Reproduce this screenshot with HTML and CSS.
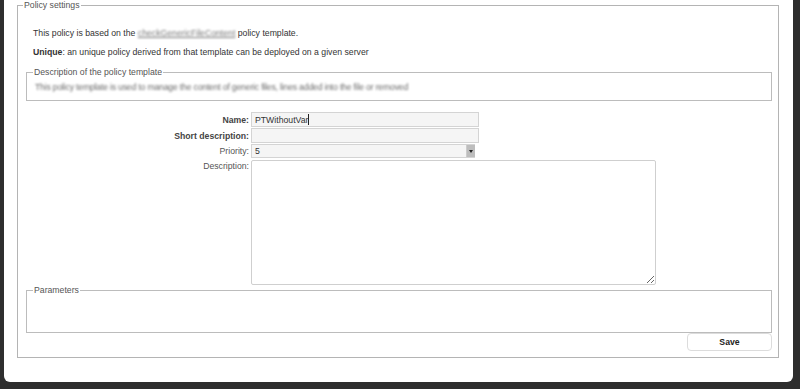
FILE: index.html
```html
<!DOCTYPE html>
<html>
<head>
<meta charset="utf-8">
<link rel="stylesheet" href="styles.css">
</head>
<body>
<div class="panel">
  <fieldset class="outer">
    <legend>Policy settings</legend>
    <p class="intro first">This policy is based on the <a class="blur link" href="#">checkGenericFileContent</a> policy template.</p>
    <p class="intro"><b>Unique</b>: an unique policy derived from that template can be deployed on a given server</p>
    <fieldset class="inner desc">
      <legend>Description of the policy template</legend>
      <p class="blur line">This policy template is used to manage the content of generic files, lines added into the file or removed</p>
    </fieldset>
    <div class="form">
      <label class="strong">Name:</label>
      <div class="field"><input class="text" type="text" value="PTWithoutVar"><span class="caret"></span></div>
      <label class="strong">Short description:</label>
      <div class="field"><input class="text" type="text" value=""></div>
      <label>Priority:</label>
      <div class="field"><select class="select"><option>5</option></select><span class="arrow"></span></div>
      <label class="top">Description:</label>
      <div class="field"><textarea class="area"></textarea></div>
    </div>
    <fieldset class="inner params">
      <legend>Parameters</legend>
      <div class="params-body"></div>
    </fieldset>
    <div class="actions"><button class="save">Save</button></div>
  </fieldset>
</div>
</body>
</html>
```
FILE: styles.css
```css
html, body {
  margin: 0;
  padding: 0;
}
body {
  background: #2e2e2e;
  font-family: "Liberation Sans", Arial, sans-serif;
  font-size: 8.7px;
  color: #333;
  height: 389px;
  overflow: hidden;
}
.panel {
  margin: 0 7px 0 4px;
  height: 382px;
  box-sizing: border-box;
  background: #fff;
  border-radius: 0 0 6px 6px;
  padding: 0 14px 0 13px;
}
fieldset {
  margin: 0;
  border: 1px solid #bcbcbc;
  min-width: 0;
}
legend {
  color: #555;
  font-size: 8.7px;
  line-height: 10px;
  padding: 0 1px;
}
.outer {
  padding: 0 6px 6px 8px;
  border-color: #b4b4b4;
}
.outer > legend {
  margin-left: -3px;
}
.intro {
  margin: 0;
  padding-left: 7px;
  line-height: 10px;
}
.intro.first {
  margin-top: 18px;
}
.intro + .intro {
  margin-top: 9px;
}
.intro b {
  color: #333;
}
.blur {
  filter: blur(1.2px);
  color: #888;
}
.link {
  text-decoration: underline;
  color: #777;
}
.inner {
  padding: 0 6px;
}
.desc {
  margin-top: 10px;
  padding-bottom: 8px;
}
.desc .line {
  margin: 5px 0 0 2px;
  line-height: 10px;
  color: #6a6a6a;
  letter-spacing: -0.2px;
}
.form {
  display: grid;
  grid-template-columns: 223px 1fr;
  column-gap: 2px;
  row-gap: 1px;
  margin-top: 11px;
  align-items: center;
}
.form label {
  text-align: right;
  color: #555;
  line-height: 10px;
}
.form label.strong {
  font-weight: bold;
  color: #444;
}
.form label.top {
  align-self: start;
  padding-top: 2px;
}
.field {
  position: relative;
  display: flex;
}
.text {
  width: 228px;
  height: 15px;
  box-sizing: border-box;
  border: 1px solid #d4d4d4;
  background: #f5f5f5;
  font-family: inherit;
  font-size: 8.7px;
  color: #333;
  padding: 0 3px;
  margin: 0;
  outline: none;
}
.caret {
  position: absolute;
  left: 57px;
  top: 2px;
  width: 1px;
  height: 11px;
  background: #222;
}
.select {
  -webkit-appearance: none;
  appearance: none;
  width: 224px;
  height: 14px;
  box-sizing: border-box;
  border: 1px solid #d4d4d4;
  background: #f5f5f5;
  font-family: inherit;
  font-size: 8.7px;
  color: #333;
  padding: 0 3px;
  margin: 0;
  border-radius: 0;
  outline: none;
}
.arrow {
  position: absolute;
  left: 215px;
  top: 1px;
  width: 8px;
  height: 12px;
  background: #bdbdbd;
  border-left: 1px solid #ccc;
}
.arrow::after {
  content: "";
  position: absolute;
  left: 2px;
  top: 5px;
  border-left: 2px solid transparent;
  border-right: 2px solid transparent;
  border-top: 3px solid #222;
}
.area {
  width: 405px;
  height: 125px;
  box-sizing: border-box;
  border: 1px solid #cfcfcf;
  border-radius: 2px;
  background: #fff;
  margin: 1px 0 0 0;
  padding: 2px;
  font-family: inherit;
  font-size: 8.7px;
  outline: none;
  resize: both;
}
.params {
  margin-top: 0;
}
.params-body {
  height: 37px;
}
.actions {
  display: flex;
  justify-content: flex-end;
  margin-top: 0;
}
.save {
  width: 85px;
  height: 18px;
  box-sizing: border-box;
  border: 1px solid #dcdcdc;
  border-radius: 4px;
  background: #fff;
  font-family: inherit;
  font-size: 8.7px;
  font-weight: bold;
  color: #222;
  padding: 0;
  margin: 0;
}
```
